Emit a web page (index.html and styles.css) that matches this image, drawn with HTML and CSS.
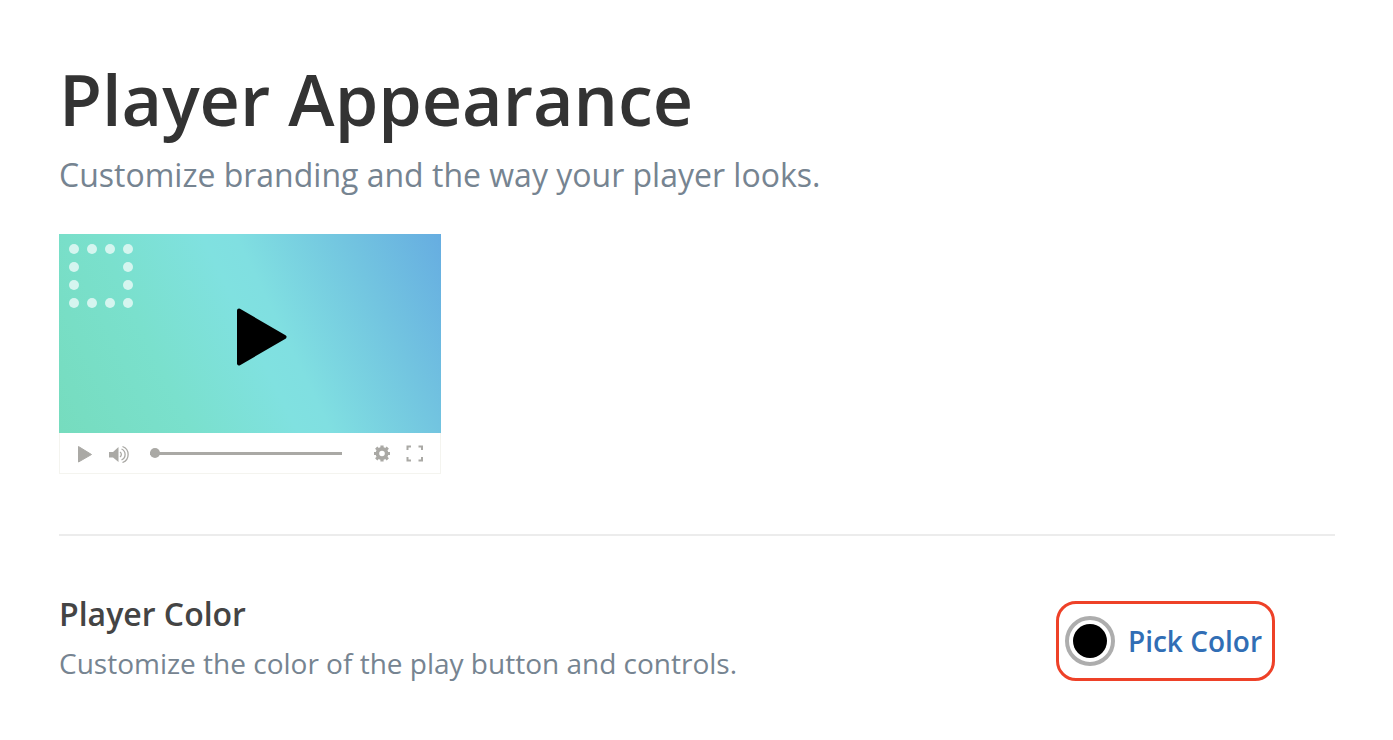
FILE: index.html
```html
<!DOCTYPE html>
<html lang="en">
  <head>
    <meta charset="utf-8" />
    <title>Player Appearance</title>
    <link rel="stylesheet" href="styles.css" />
  </head>
  <body>
    <main class="wrapper">
      <header>
        <h1>Player Appearance</h1>
        <p class="subtitle">Customize branding and the way your player looks.</p>
      </header>

      <div class="player">
        <div class="screen">
          <!-- logo placeholder -->
          <svg class="logo" viewBox="0 0 64 64" aria-hidden="true">
            <circle cx="5" cy="5" r="5" />
            <circle cx="23" cy="5" r="5" />
            <circle cx="41" cy="5" r="5" />
            <circle cx="59" cy="5" r="5" />
            <circle cx="5" cy="23" r="5" />
            <circle cx="59" cy="23" r="5" />
            <circle cx="5" cy="41" r="5" />
            <circle cx="59" cy="41" r="5" />
            <circle cx="5" cy="59" r="5" />
            <circle cx="23" cy="59" r="5" />
            <circle cx="41" cy="59" r="5" />
            <circle cx="59" cy="59" r="5" />
          </svg>
          <button type="button" class="big-play" aria-label="Play video">
            <svg viewBox="0 0 50 58">
              <path d="M2 2.500 L47.500 29 L2 55.500 Z" stroke="#000" stroke-width="4" stroke-linejoin="round" />
            </svg>
          </button>
        </div>
        <div class="controls">
          <button type="button" class="play" aria-label="Play">
            <svg viewBox="0 0 20 20">
              <path d="M3.500 3.500 L16.500 11.500 L3.500 19 Z" stroke="#aaa9a5" stroke-linejoin="round" />
            </svg>
          </button>
          <button type="button" class="volume" aria-label="Volume">
            <svg viewBox="0 0 20 20">
              <path d="M0 9 H4 L9.500 4 V19 L4 14.500 H0 Z" />
              <path d="M11 9 A3 3 0 0 1 11 14 M12.500 6 A6 6 0 0 1 12.500 17 M13.500 3.500 A8.500 8.500 0 0 1 13.500 19.500" fill="none" stroke="#aaa9a5" stroke-width="1.300" />
            </svg>
          </button>
          <input type="range" min="0" max="100" value="0" aria-label="Seek" />
          <button type="button" class="settings" aria-label="Settings">
            <svg viewBox="0 0 20 20">
              <circle cx="10" cy="10.500" r="4.600" fill="none" stroke="#aaa9a5" stroke-width="3.600" />
              <path d="M10 2.500 V6 M10 15 V18.500 M2 10.500 H5 M15 10.500 H18 M4.200 4.700 L6.400 6.900 M13.600 14.100 L15.800 16.300 M4.200 16.300 L6.400 14.100 M13.600 6.900 L15.800 4.700" stroke="#aaa9a5" stroke-width="3.200" />
            </svg>
          </button>
          <button type="button" class="fullscreen" aria-label="Full screen">
            <svg viewBox="0 0 20 20">
              <path d="M2.500 7 V3.500 H6 M13.500 3.500 H17 V7 M17 14 V17.500 H13.500 M6 17.500 H2.500 V14" fill="none" stroke="#aaa9a5" stroke-width="2" />
            </svg>
          </button>
        </div>
      </div>

      <hr />

      <section class="setting">
        <div>
          <h2>Player Color</h2>
          <p>Customize the color of the play button and controls.</p>
        </div>
        <button type="button" class="pick-color">
          <span class="swatch"></span>
          Pick Color
        </button>
      </section>
    </main>
  </body>
</html>
```

FILE: styles.css
```css
* {
  box-sizing: border-box;
}
body {
  margin: 0;
  background-color: #fff;
  color: #333;
  font-family: "Open Sans", sans-serif;
}
h1,
h2,
p {
  margin: 0;
  font-weight: 600;
}
button {
  padding: 0;
  border: none;
  background: none;
  font: inherit;
  cursor: pointer;
}
svg {
  display: block;
}
.wrapper {
  padding: 55px 58px 40px 59px;
}

h1 {
  font-size: 70px;
  line-height: 88px;
}
p {
  color: #768491;
  font-weight: 400;
}
.subtitle {
  margin-top: 8px;
  font-size: 32px;
  line-height: 48px;
}

.player {
  width: 382px;
  margin-top: 35px;
}
.screen {
  position: relative;
  display: flex;
  align-items: center;
  justify-content: center;
  height: 199px;
  background: linear-gradient(64deg, #76dcbe, #7ae0cd 28%, #80e1e0 50%, #80dfe1 57%, #72c4e0 80%, #66ade1);
}
.logo {
  position: absolute;
  top: 10px;
  left: 10px;
  width: 64px;
  fill: #d5f5ef;
}
.big-play {
  margin: 6px 0 0 24px;
}
.big-play svg {
  width: 50px;
}
.controls {
  display: flex;
  align-items: center;
  height: 41px;
  padding: 0 15px;
  border: 1px solid #f4f4ef;
  border-top: none;
}
.controls svg {
  width: 20px;
  height: 20px;
  fill: #aaa9a5;
}
.volume {
  margin-left: 14px;
}
.settings {
  margin-left: auto;
}
.fullscreen {
  margin-left: 13px;
}
input[type="range"] {
  appearance: none;
  width: 192px;
  height: 10px;
  margin: 0 0 0 21px;
  background: linear-gradient(#aaa9a5, #aaa9a5) center / 100% 3px no-repeat;
}
input[type="range"]::-webkit-slider-thumb {
  appearance: none;
  width: 10px;
  height: 10px;
  border-radius: 50%;
  background-color: #aaa9a5;
}

hr {
  height: 2px;
  margin: 60px 0 54px;
  border: none;
  background-color: #ececec;
}

.setting {
  display: flex;
  align-items: center;
  justify-content: space-between;
  padding-right: 60px;
}
h2 {
  font-size: 32px;
  line-height: 48px;
  color: #444;
}
.setting p {
  font-size: 28px;
  line-height: 50px;
}
.pick-color {
  display: flex;
  align-items: center;
  gap: 13px;
  height: 80px;
  margin-top: 4px;
  padding: 0 10px 0 6px;
  border: 3px solid #ee4128;
  border-radius: 20px;
  color: #316eb5;
  font-size: 28px;
  font-weight: 600;
}
.swatch {
  width: 50px;
  height: 50px;
  padding: 4px;
  border: 4px solid #adadad;
  border-radius: 50%;
  background: #000 content-box;
}
```
